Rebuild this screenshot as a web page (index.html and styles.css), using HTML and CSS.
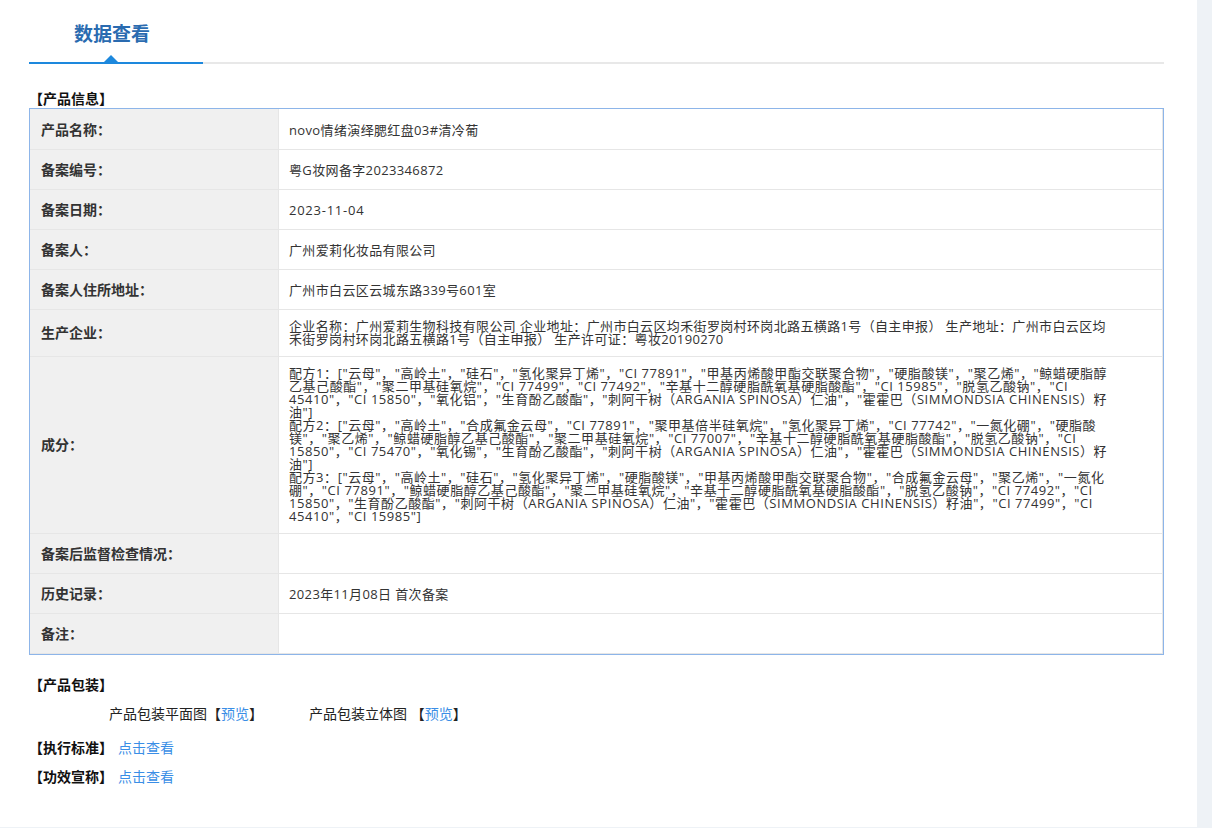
FILE: index.html
```html
<!DOCTYPE html>
<html lang="zh-CN">
<head>
<meta charset="utf-8">
<title>数据查看</title>
<link rel="stylesheet" href="styles.css">
</head>
<body>
<div class="page">
  <main class="content">
    <div class="tabs"><h1 class="tab">数据查看</h1></div>
    <div class="section-title first">【产品信息】</div>
    <table class="info">
      <tr><th>产品名称：</th><td>novo情绪演绎腮红盘03#清冷葡</td></tr>
      <tr><th>备案编号：</th><td>粤G妆网备字2023346872</td></tr>
      <tr><th>备案日期：</th><td class="date">2023-11-04</td></tr>
      <tr><th>备案人：</th><td>广州爱莉化妆品有限公司</td></tr>
      <tr><th>备案人住所地址：</th><td>广州市白云区云城东路339号601室</td></tr>
      <tr><th class="tall">生产企业：</th><td class="multi"><div class="wrap">企业名称：广州爱莉生物科技有限公司 企业地址：广州市白云区均禾街罗岗村环岗北路五横路1号（自主申报） 生产地址：广州市白云区均<br>禾街罗岗村环岗北路五横路1号（自主申报） 生产许可证：粤妆20190270</div></td></tr>
      <tr><th class="tall">成分：</th><td class="multi"><div class="wrap formula">配方1：["云母"，"高岭土"，"硅石"，"氢化聚异丁烯"，"CI 77891"，"甲基丙烯酸甲酯交联聚合物"，"硬脂酸镁"，"聚乙烯"，"鲸蜡硬脂醇<br>乙基己酸酯"，"聚二甲基硅氧烷"，"CI 77499"，"CI 77492"，"辛基十二醇硬脂酰氧基硬脂酸酯"，"CI 15985"，"脱氢乙酸钠"，"CI<br>45410"，"CI 15850"，"氧化铝"，"生育酚乙酸酯"，"刺阿干树（ARGANIA SPINOSA）仁油"，"霍霍巴（SIMMONDSIA CHINENSIS）籽<br>油"]<br>配方2：["云母"，"高岭土"，"合成氟金云母"，"CI 77891"，"聚甲基倍半硅氧烷"，"氢化聚异丁烯"，"CI 77742"，"一氮化硼"，"硬脂酸<br>镁"，"聚乙烯"，"鲸蜡硬脂醇乙基己酸酯"，"聚二甲基硅氧烷"，"CI 77007"，"辛基十二醇硬脂酰氧基硬脂酸酯"，"脱氢乙酸钠"，"CI<br>15850"，"CI 75470"，"氧化锡"，"生育酚乙酸酯"，"刺阿干树（ARGANIA SPINOSA）仁油"，"霍霍巴（SIMMONDSIA CHINENSIS）籽<br>油"]<br>配方3：["云母"，"高岭土"，"硅石"，"氢化聚异丁烯"，"硬脂酸镁"，"甲基丙烯酸甲酯交联聚合物"，"合成氟金云母"，"聚乙烯"，"一氮化<br>硼"，"CI 77891"，"鲸蜡硬脂醇乙基己酸酯"，"聚二甲基硅氧烷"，"辛基十二醇硬脂酰氧基硬脂酸酯"，"脱氢乙酸钠"，"CI 77492"，"CI<br>15850"，"生育酚乙酸酯"，"刺阿干树（ARGANIA SPINOSA）仁油"，"霍霍巴（SIMMONDSIA CHINENSIS）籽油"，"CI 77499"，"CI<br>45410"，"CI 15985"]</div></td></tr>
      <tr><th>备案后监督检查情况：</th><td></td></tr>
      <tr><th>历史记录：</th><td>2023年11月08日 首次备案</td></tr>
      <tr><th>备注：</th><td></td></tr>
    </table>
    <div class="section-title pack">【产品包装】</div>
    <div class="pack-row">
      <span class="pack-item one">产品包装平面图【<a href="#">预览</a>】</span>
      <span class="pack-item two">产品包装立体图 【<a href="#">预览</a>】</span>
    </div>
    <div class="link-row"><span class="section-title">【执行标准】</span><a href="#">点击查看</a></div>
    <div class="link-row"><span class="section-title">【功效宣称】</span><a href="#">点击查看</a></div>
  </main>
  <div class="gutter"></div>
</div>
</body>
</html>
```
FILE: styles.css
```css
html, body { margin: 0; padding: 0; }
body {
  font-family: "Open Sans", "Noto Sans CJK SC", sans-serif;
  font-size: 14px;
  color: #333;
  background: #fff;
  overflow: hidden;
}
.page { display: flex; width: 1212px; height: 827px; border-bottom: 1px solid #eef2f6; }
.content { width: 1135px; padding: 0 33px 0 29px; flex: none; }
.gutter { width: 15px; background: #eef2f6; flex: none; }
.tabs { height: 62px; border-bottom: 2px solid #e8e8e8; position: relative; }
.tab {
  position: absolute; left: 0; top: 0; bottom: -2px; width: 174px; margin: 0;
  box-sizing: border-box; padding: 21px 0 0 45px;
  font-size: 19px; line-height: 26px; font-weight: 700; color: #2a6bb0;
  border-bottom: 2px solid #1d88dd;
}
.tab::after {
  content: ""; position: absolute; left: 75px; bottom: 0;
  border: 7px solid transparent; border-top: 0; border-bottom-color: #1d88dd;
}
.section-title { font-weight: 700; color: #111; }
.first { margin-top: 25px; line-height: 19px; }
.info { width: 1135px; border-collapse: separate; border-spacing: 0; border: 1px solid #8db5e9; table-layout: fixed; box-sizing: border-box; }
.info th, .info td { border-right: 1px solid #e6e6e6; border-bottom: 1px solid #e6e6e6; height: 40px; padding: 0; box-sizing: border-box; }
.info tr:first-child th, .info tr:first-child td { height: 41px; }
.info th { width: 249px; background: #f0f0f0; text-align: left; padding: 0 0 1px 11px; font-weight: 700; color: #333; }
.info th.tall { padding-bottom: 3px; }
.info td { padding-left: 10px; font-size: 13px; letter-spacing: 0.36px; }
.info td.date { letter-spacing: 0.75px; }
.info td.multi { padding-top: 10px; padding-bottom: 10px; }
.wrap { width: 830px; line-height: 13px; }
.wrap.formula { letter-spacing: 0.56px; }
.pack { margin-top: 21px; line-height: 18px; }
.pack-row { margin: 11px 0 16px; height: 18px; line-height: 18px; color: #222; display: flex; }
.pack-item.one { margin-left: 80px; width: 200px; }
.pack-row a, .link-row a { color: #3a8ee6; text-decoration: none; }
.link-row { margin-top: 11px; line-height: 18px; display: flex; gap: 5px; }
```
